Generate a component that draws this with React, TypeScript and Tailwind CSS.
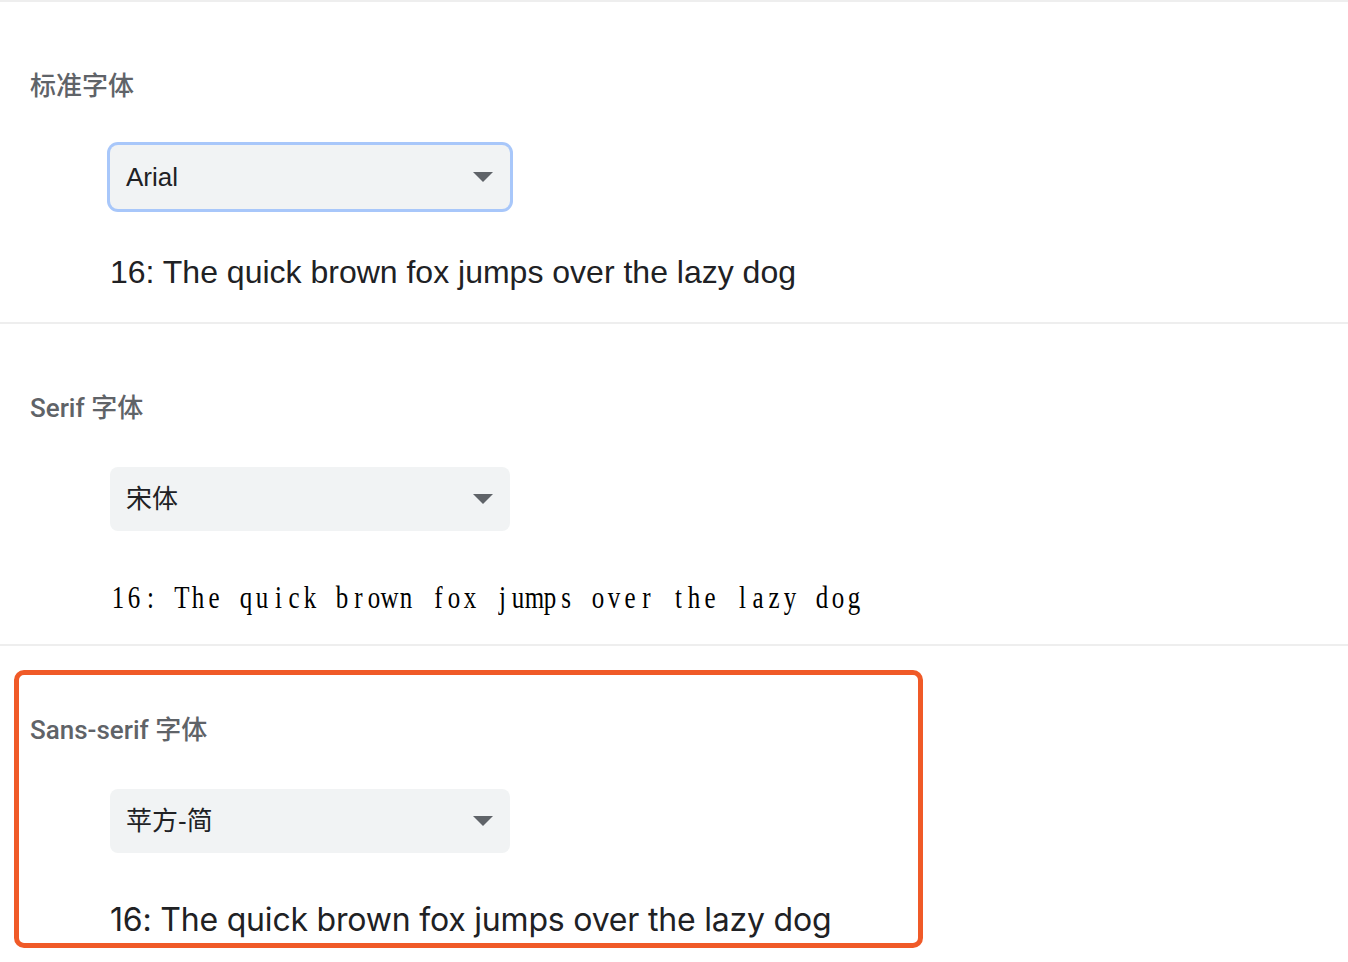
import React from 'react'

const SAMPLE = '16: The quick brown fox jumps over the lazy dog'

type Section = {
  label: string
  value: string
  kind: 'arial' | 'song' | 'pingfang'
  focused?: boolean
  marked?: boolean
}

const SECTIONS: Section[] = [
  { label: '标准字体', value: 'Arial', kind: 'arial', focused: true },
  { label: 'Serif 字体', value: '宋体', kind: 'song' },
  { label: 'Sans-serif 字体', value: '苹方-简', kind: 'pingfang', marked: true },
]

function Caret() {
  return (
    <svg width="20" height="10" viewBox="0 0 20 10" aria-hidden="true">
      <polygon points="0,0 20,0 10,10" fill="#5f6368" />
    </svg>
  )
}

// 宋体-style sample: half-width serif glyphs on a fixed 16px grid
function SongSample() {
  return (
    <span className="ml-[110px] inline-flex pt-[3px] font-['Liberation_Serif',serif] text-[32px] text-black">
      {SAMPLE.split('').map((ch, i) => (
        <span key={i} className="w-[16px] inline-flex justify-center">
          <span className="inline-block scale-x-[0.78]">{ch === ' ' ? '\u00a0' : ch}</span>
        </span>
      ))}
    </span>
  )
}

function Sample({ kind }: { kind: Section['kind'] }) {
  if (kind === 'song') return <SongSample />
  if (kind === 'pingfang')
    return (
      <span className="ml-[110px] inline-block pt-[4px] font-['Inter',sans-serif] text-[32px] tracking-[-0.2px]">
        {SAMPLE}
      </span>
    )
  return <span className="ml-[110px] font-['Liberation_Sans',sans-serif] text-[32px]">{SAMPLE}</span>
}

function FontSection({ s }: { s: Section }) {
  return (
    <section className="relative h-[322px] border-t-2 border-[#eeeeee]">
      {/* label */}
      <div className="pt-[64px] pl-[30px] h-[104px] leading-[40px] text-[26px] font-medium text-[#5f6368] font-['Roboto','Noto_Sans_CJK_SC',sans-serif]">
        {s.label}
      </div>

      {/* select */}
      <div
        className={
          'mt-[39px] ml-[110px] w-[400px] h-[64px] rounded-[8px] bg-[#f1f3f4] flex items-center justify-between pl-[16px] pr-[17px] ' +
          (s.focused ? 'ring-[3px] ring-[#a8c7fa]' : '')
        }
      >
        <span className="text-[26px] text-[#202124] font-['Liberation_Sans','Noto_Sans_CJK_SC',sans-serif]">
          {s.value}
        </span>
        <Caret />
      </div>

      {/* sample */}
      <div className="mt-[39px] h-[48px] leading-[48px] text-[#202124] whitespace-nowrap">
        <Sample kind={s.kind} />
      </div>

      {s.marked && (
        <div className="absolute left-[14px] top-[24px] w-[909px] h-[278px] rounded-[10px] border-[5px] border-[#f05a28] pointer-events-none" />
      )}
    </section>
  )
}

export default function App() {
  return (
    <div className="w-[1348px] h-[962px] overflow-hidden bg-white">
      {SECTIONS.map((s) => (
        <FontSection key={s.label} s={s} />
      ))}
    </div>
  )
}
